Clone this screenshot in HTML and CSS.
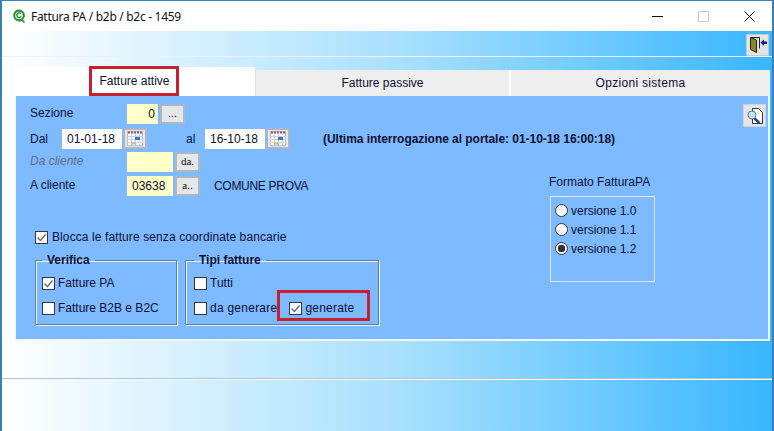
FILE: index.html
```html
<!DOCTYPE html>
<html lang="it">
<head>
    <meta charset="UTF-8">
    <title>Fattura PA / b2b / b2c - 1459</title>
    <link rel="stylesheet" href="styles.css">
</head>
<body>
    <div class="window">
        <div class="titlebar">
            <svg class="app-icon" width="16" height="16" viewBox="0 0 16 16">
                <path d="M8 1.500a6 6 0 1 0 2.500 11.500l2.500 2 1-1-2-2.200A6 6 0 0 0 8 1.500z" fill="#2f8f3a"/>
                <circle cx="8" cy="7.500" r="3.800" fill="#dff0d8"/>
                <path d="M10 8.500a2.300 2.300 0 1 1-.4-3" fill="none" stroke="#2f7f38" stroke-width="1.300"/>
            </svg>
            <span class="title-text">Fattura PA / b2b / b2c - 1459</span>
            <div class="win-controls">
                <svg width="11" height="11" viewBox="0 0 11 11"><path d="M0 5.500h11" stroke="#111" fill="none"/></svg>
                <svg width="11" height="11" viewBox="0 0 11 11"><rect x=".5" y=".5" width="10" height="10" stroke="#ccc" fill="none"/></svg>
                <svg width="11" height="11" viewBox="0 0 11 11"><path d="M.5 .5l10 10M10.500 .5l-10 10" stroke="#111" fill="none"/></svg>
            </div>
        </div>

        <div class="toolbar">
            <div class="tool-btn">
                <svg width="18" height="17" viewBox="0 0 18 17">
                    <path d="M1.500 1.500h9v11" fill="none" stroke="#222"/>
                    <path d="M1.500 1.500l6 2.500v12.500l-6-3z" fill="#8a8a24" stroke="#222"/>
                    <path d="M11.500 6.500l3.500-3v2h3v2.500h-3v2z" fill="#14148c"/>
                </svg>
            </div>
        </div>

        <div class="main">
            <div class="tabs">
                <div class="tab tab-active"><span class="mark mark-tab">Fatture attive</span></div>
                <div class="tab tab-second">Fatture passive</div>
                <div class="tab tab-third">Opzioni sistema</div>
            </div>

            <div class="panel">
                <div class="left-col">
                    <div class="row row-sezione">
                        <span class="lbl">Sezione</span>
                        <span class="field field-yellow field-num">0</span>
                        <span class="btn btn-dots">...</span>
                    </div>
                    <div class="row row-dal">
                        <span class="lbl lbl-short">Dal</span>
                        <span class="field field-date">01-01-18</span>
                        <span class="btn btn-cal">
                            <svg width="18" height="17" viewBox="0 0 18 17">
                                <rect x="1.500" y="1.500" width="15" height="14" fill="#fdfdff" stroke="#b4bccb"/>
                                <path d="M2 2.500h14" stroke="#a8465c" stroke-width="2" stroke-dasharray="2 1" fill="none"/>
                                <path d="M1 6.500h16M1 9.500h16M1 12.500h16M5.500 4v11M9.500 4v11M13.500 4v11" stroke="#c3d2e8" fill="none"/>
                                <rect x="9" y="7" width="5" height="3" fill="#3a78c8"/>
                                <path d="M5 13.500h5" stroke="#e8b860" stroke-width="2" fill="none"/>
                            </svg>
                        </span>
                        <span class="lbl-al">al</span>
                        <span class="field field-date">16-10-18</span>
                        <span class="btn btn-cal">
                            <svg width="18" height="17" viewBox="0 0 18 17">
                                <rect x="1.500" y="1.500" width="15" height="14" fill="#fdfdff" stroke="#b4bccb"/>
                                <path d="M2 2.500h14" stroke="#a8465c" stroke-width="2" stroke-dasharray="2 1" fill="none"/>
                                <path d="M1 6.500h16M1 9.500h16M1 12.500h16M5.500 4v11M9.500 4v11M13.500 4v11" stroke="#c3d2e8" fill="none"/>
                                <rect x="9" y="7" width="5" height="3" fill="#3a78c8"/>
                                <path d="M5 13.500h5" stroke="#e8b860" stroke-width="2" fill="none"/>
                            </svg>
                        </span>
                        <span class="last-query">(Ultima interrogazione al portale: 01-10-18 16:00:18)</span>
                    </div>
                    <div class="row row-cliente row-da">
                        <span class="lbl lbl-off">Da cliente</span>
                        <span class="field field-yellow field-code"></span>
                        <span class="btn btn-serif">da.</span>
                    </div>
                    <div class="row row-cliente">
                        <span class="lbl">A cliente</span>
                        <span class="field field-yellow field-code field-pad">03638</span>
                        <span class="btn btn-serif">a..</span>
                        <span class="client-name">COMUNE PROVA</span>
                    </div>

                    <label class="check check-block">
                        <span class="box"><svg width="11" height="11" viewBox="0 0 11 11"><path d="M1.500 5.500l3 3 5-6" fill="none" stroke="#666" stroke-width="1.300"/></svg></span>
                        Blocca le fatture senza coordinate bancarie
                    </label>

                    <div class="groups">
                        <fieldset class="group group-verifica">
                            <legend>Verifica</legend>
                            <label class="check">
                                <span class="box"><svg width="11" height="11" viewBox="0 0 11 11"><path d="M1.500 5.500l3 3 5-6" fill="none" stroke="#666" stroke-width="1.300"/></svg></span>
                                Fatture PA
                            </label>
                            <label class="check">
                                <span class="box"></span>
                                Fatture B2B e B2C
                            </label>
                        </fieldset>
                        <fieldset class="group group-tipi">
                            <legend>Tipi fatture</legend>
                            <label class="check">
                                <span class="box"></span>
                                Tutti
                            </label>
                            <div class="tipi-row">
                                <label class="check check-wide">
                                    <span class="box"></span>
                                    da generare
                                </label>
                                <label class="check mark mark-check">
                                    <span class="box"><svg width="11" height="11" viewBox="0 0 11 11"><path d="M1.500 5.500l3 3 5-6" fill="none" stroke="#666" stroke-width="1.300"/></svg></span>
                                    generate
                                </label>
                            </div>
                        </fieldset>
                    </div>
                </div>

                <div class="right-col">
                    <div class="search-btn">
                        <svg width="18" height="18" viewBox="0 0 18 18">
                            <path d="M6.500 1.500h6l4 4v11h-10z" fill="#fff" stroke="#222" stroke-width=".9"/>
                            <path d="M8 11l5.500 5" stroke="#1c3fa8" stroke-width="2.400"/>
                            <circle cx="6" cy="8" r="4" fill="#c4e6f2" stroke="#5b7f92"/>
                        </svg>
                    </div>
                    <div class="format-title">Formato FatturaPA</div>
                    <div class="format-box">
                        <label class="radio"><span class="dot"></span>versione 1.0</label>
                        <label class="radio"><span class="dot"></span>versione 1.1</label>
                        <label class="radio"><span class="dot dot-on"></span>versione 1.2</label>
                    </div>
                </div>
            </div>
        </div>

        <div class="footer"></div>
    </div>
</body>
</html>
```

FILE: styles.css
```css
* {
    box-sizing: border-box;
}
html, body {
    margin: 0;
    padding: 0;
    overflow: hidden;
}
body {
    font-family: "Liberation Sans", Arial, sans-serif;
    font-size: 12px;
    color: #0c1030;
}
.window {
    width: 774px;
    height: 431px;
    border: 2px solid #3b7fb5;
    border-width: 1px 2px 0 2px;
    display: flex;
    flex-direction: column;
    background: #fff;
}

/* barra del titolo */
.titlebar {
    height: 30px;
    display: flex;
    align-items: center;
    padding-left: 9px;
    background: #fff;
}
.title-text {
    margin-left: 4px;
    font-family: "Noto Sans", sans-serif;
    font-size: 12px;
    letter-spacing: -.3px;
    color: #111;
}
.win-controls {
    margin-left: auto;
    display: flex;
    gap: 35px;
    padding-right: 17px;
}

.toolbar, .main, .footer {
    background: linear-gradient(to right, #fff 0%, #a8e0ff 52%, #38b6ff 100%);
}
.toolbar {
    height: 25px;
    display: flex;
    justify-content: flex-end;
    align-items: center;
    padding: 2px 3px 0 0;
}
.tool-btn {
    width: 23px;
    height: 22px;
    background: #e4e4e4;
    border: 1px solid #c2ccd4;
    display: flex;
    align-items: center;
    justify-content: center;
}
.main {
    height: 323px;
    padding: 10px 0 0 12px;
    border-top: 1px solid #e9f2f6;
    border-bottom: 1px solid #b8c4cc;
}
.footer {
    flex: 1;
    border-top: 1px solid #f2f7fa;
}

/* schede */
.tabs {
    display: flex;
    height: 29px;
    align-items: flex-end;
}
.tab {
    height: 26px;
    background: #eeeeee;
    display: flex;
    align-items: center;
    justify-content: center;
    border-right: 2px solid #fff;
}
.tab-active {
    width: 242px;
    height: 29px;
    background: #fff;
    border-right: 1px solid #dde;
    padding-right: 1px;
}
.tab-second {
    width: 255px;
}
.tab-third {
    width: 259px;
    border-right: 0;
    letter-spacing: .3px;
}
.mark {
    border: 3px solid #c8202f;
}
.mark-tab {
    height: 30px;
    padding: 0 6px 0 7px;
    margin-top: -2px;
    line-height: 24px;
}

.panel {
    width: 756px;
    height: 245px;
    background: #7ebaff;
    border: 2px solid #f2f7fb;
    border-top: 0;
    display: flex;
}
.left-col {
    width: 532px;
    padding: 8px 0 0 14px;
    flex: none;
}
.right-col {
    position: relative;
    flex: 1;
    padding: 78px 0 0 1px;
}

/* righe del modulo */
.row {
    display: flex;
    align-items: center;
    white-space: nowrap;
}
.row-sezione {
    height: 20px;
}
.row-dal {
    height: 21px;
    margin-top: 4px;
}
.row-cliente {
    height: 20px;
    margin-top: 4px;
}
.row-da {
    margin-top: 3px;
}
.lbl {
    width: 97px;
    flex: none;
    padding-bottom: 2px;
}
.lbl-short {
    width: 32px;
    padding-bottom: 0;
}
.lbl-off {
    color: #5f6f88;
    font-style: italic;
}
.lbl-al {
    width: 19px;
    margin-left: 39px;
    flex: none;
}
.field {
    height: 20px;
    line-height: 21px;
    background: #fff;
    flex: none;
    font-size: 12px;
}
.field-yellow {
    background: #ffffc8;
}
.field-num {
    width: 31px;
    text-align: right;
    padding-right: 3px;
}
.field-date {
    width: 60px;
    padding-left: 5px;
}
.field-code {
    width: 46px;
}
.field-pad {
    padding-left: 5px;
}
.btn {
    height: 20px;
    width: 25px;
    margin-left: 2px;
    background: #e6e6e6;
    border: 2px solid #a9b7c9;
    display: flex;
    align-items: center;
    justify-content: center;
    flex: none;
    font-size: 11px;
    padding-bottom: 2px;
}
.btn-cal {
    margin-left: 1px;
    padding: 0;
    width: 24px;
    height: 21px;
}
.btn-serif {
    font-family: "Liberation Serif", serif;
    font-size: 11px;
    color: #111;
}
.last-query {
    margin-left: 33px;
    font-weight: bold;
    letter-spacing: -.04px;
    flex: none;
}
.client-name {
    margin-left: 14px;
    letter-spacing: -.3px;
}

/* caselle */
.check {
    display: flex;
    align-items: center;
    gap: 3px;
    white-space: nowrap;
}
.box {
    width: 13px;
    height: 13px;
    background: #fff;
    border: 1px solid #33363f;
    display: flex;
    align-items: center;
    justify-content: center;
    flex: none;
}
.check-block {
    margin: 33px 0 0 5px;
    height: 16px;
    gap: 4px;
    letter-spacing: .1px;
}
.check-wide {
    letter-spacing: .25px;
}
.groups {
    display: flex;
    gap: 8px;
    margin: 8px 0 0 5px;
}
.group {
    margin: 0;
    height: 72px;
    border: 1px solid #5f7f9f;
    box-shadow: 1px 1px 0 #eef4fa, inset 1px 1px 0 #eef4fa;
    padding: 8px 0 0 6px;
    display: flex;
    flex-direction: column;
    gap: 9px;
}
.group legend {
    font-weight: bold;
    padding: 0 5px;
    margin-left: 0;
}
.group-verifica {
    width: 142px;
}
.group-tipi {
    width: 194px;
    padding-left: 8px;
}
.group .check {
    height: 16px;
}
.tipi-row {
    display: flex;
    align-items: center;
    height: 16px;
}
.group .mark-check {
    height: 31px;
    width: 93px;
    margin: 0 0 5px 0;
    padding: 5px 0 0 9px;
    flex: none;
    letter-spacing: .2px;
}

/* formato */
.search-btn {
    position: absolute;
    top: 8px;
    right: 2px;
    width: 23px;
    height: 23px;
    background: #e4e4e4;
    border: 1px solid #c8d4e0;
    display: flex;
    align-items: center;
    justify-content: center;
}
.format-title {
    height: 16px;
    line-height: 16px;
}
.format-box {
    width: 105px;
    height: 86px;
    margin-top: 6px;
    margin-left: 1px;
    border: 1px solid #d8e6f6;
    padding: 4px 0 0 4px;
}
.radio {
    display: flex;
    align-items: center;
    height: 19px;
    gap: 3px;
    white-space: nowrap;
}
.dot {
    width: 13px;
    height: 13px;
    border-radius: 50%;
    background: #fff;
    border: 1px solid #333;
    flex: none;
}
.dot-on {
    background: radial-gradient(circle, #333 0, #333 3.500px, #fff 4px);
}
```
